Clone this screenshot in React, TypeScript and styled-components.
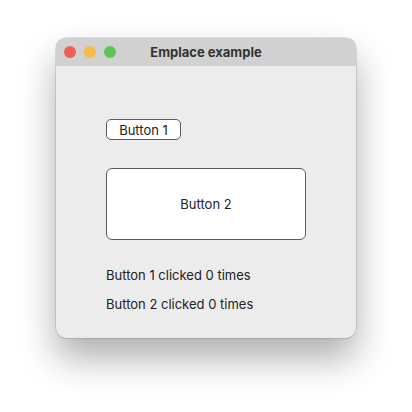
import React, { useState } from "react";
import styled, { createGlobalStyle } from "styled-components";

const Global = createGlobalStyle`
  html, body { margin: 0; padding: 0; background: #ffffff; }
  body { font-family: Inter, "Liberation Sans", sans-serif; }
`;

const Page = styled.div`
  width: 412px;
  height: 412px;
  display: flex;
  align-items: flex-start;
  justify-content: flex-start;
  padding: 38px 0 0 56px;
  box-sizing: border-box;
`;

const Window = styled.div`
  width: 300px;
  height: 300px;
  border-radius: 10px;
  overflow: hidden;
  background: #ececec;
  display: flex;
  flex-direction: column;
  box-shadow: 0 0 0 0.5px rgba(0, 0, 0, 0.22), 0 20px 36px rgba(0, 0, 0, 0.32);
`;

const TitleBar = styled.div`
  height: 28px;
  flex: none;
  background: #d1d1d1;
  display: flex;
  align-items: center;
  position: relative;
  padding-left: 8px;
  gap: 8px;
`;

const Light = styled.span<{ $c: string }>`
  width: 12px;
  height: 12px;
  border-radius: 50%;
  background: ${(p) => p.$c};
`;

const Title = styled.div`
  position: absolute;
  left: 0;
  right: 0;
  top: 0;
  bottom: 0;
  display: flex;
  align-items: center;
  justify-content: center;
  font-weight: 700;
  font-size: 13px;
  color: #333333;
  pointer-events: none;
`;

const Body = styled.div`
  flex: 1;
  display: flex;
  flex-direction: column;
  align-items: flex-start;
  padding: 53px 0 0 50px;
`;

const Button = styled.button<{ $big?: boolean }>`
  box-sizing: border-box;
  font-family: inherit;
  font-size: 13px;
  color: #222;
  background: #ffffff;
  border: 1px solid #5c5c5c;
  border-radius: ${(p) => (p.$big ? "6px" : "5px")};
  width: ${(p) => (p.$big ? "200px" : "75px")};
  height: ${(p) => (p.$big ? "72px" : "21px")};
  padding: 0;
  margin-bottom: ${(p) => (p.$big ? "27px" : "28px")};
  display: flex;
  align-items: center;
  justify-content: center;
  cursor: default;
`;

const Line = styled.div`
  font-size: 13px;
  color: #222;
  height: 29px;
  line-height: 16px;
`;

export default function App() {
  const [a, setA] = useState(0);
  const [b, setB] = useState(0);
  return (
    <>
      <Global />
      <Page>
        <Window>
          <TitleBar>
            <Light $c="#ee5f57" />
            <Light $c="#f7bd45" />
            <Light $c="#5fc552" />
            <Title>Emplace example</Title>
          </TitleBar>
          <Body>
            <Button onClick={() => setA(a + 1)}>Button 1</Button>
            <Button $big onClick={() => setB(b + 1)}>Button 2</Button>
            <Line>Button 1 clicked {a} times</Line>
            <Line>Button 2 clicked {b} times</Line>
          </Body>
        </Window>
      </Page>
    </>
  );
}
